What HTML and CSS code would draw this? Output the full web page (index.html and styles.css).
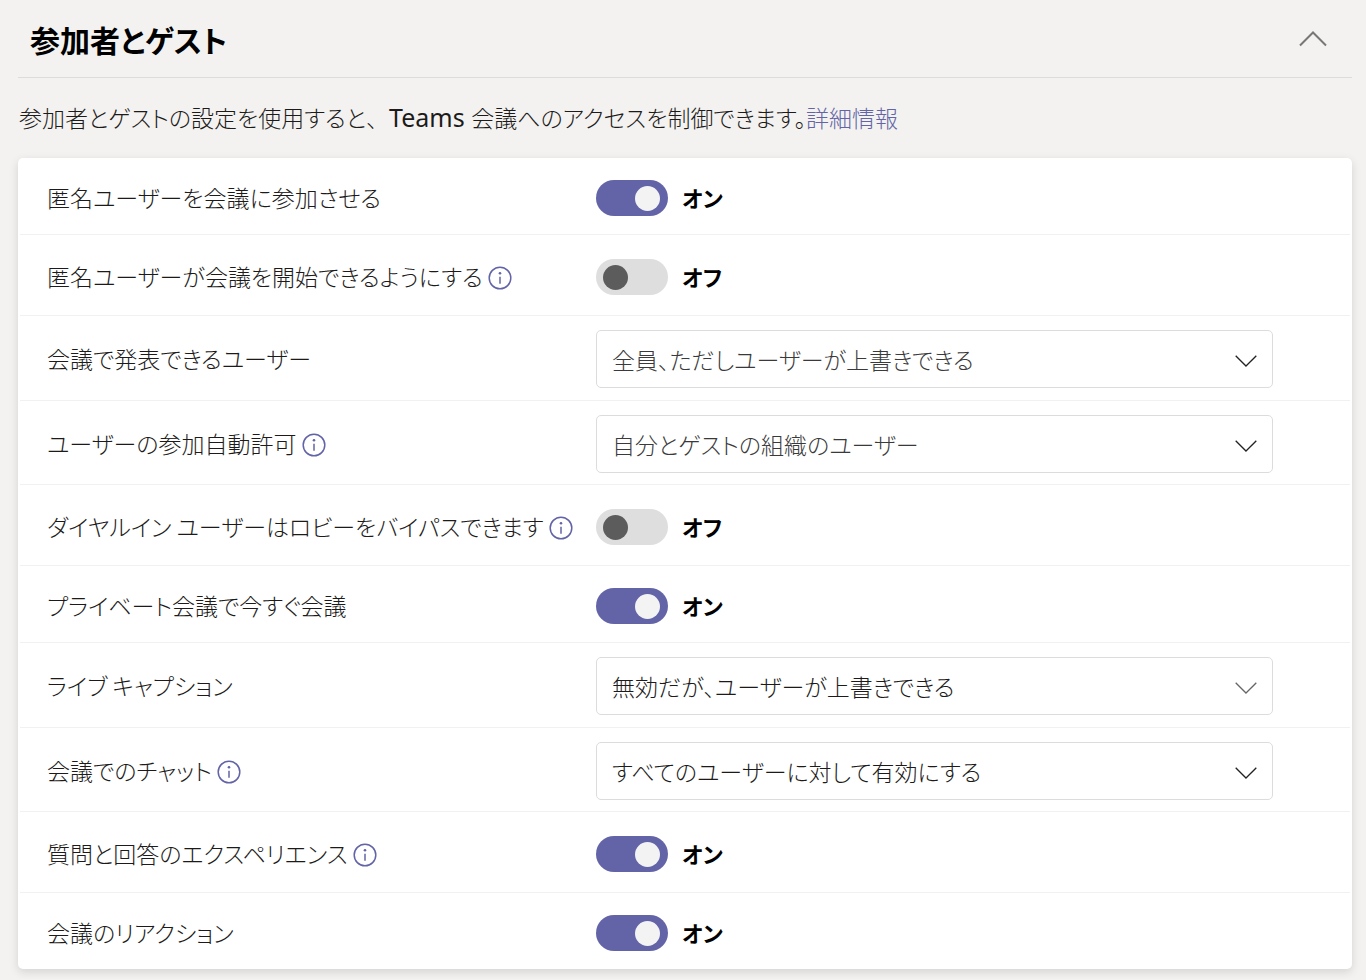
FILE: index.html
```html
<!DOCTYPE html>
<html lang="ja">
<head>
<meta charset="utf-8">
<meta name="viewport" content="width=device-width, initial-scale=1">
<title>参加者とゲスト</title>
<link rel="stylesheet" href="styles.css">
</head>
<body>
<svg class="sprite" aria-hidden="true">
  <symbol id="info" viewBox="0 0 24 24"><circle cx="12" cy="12" r="10.8" fill="none" stroke="currentColor" stroke-width="1.5"/><circle cx="12" cy="7.2" r="1.3" fill="currentColor"/><path d="M12 10.8v7" fill="none" stroke="currentColor" stroke-width="1.5"/></symbol>
  <symbol id="down" viewBox="0 0 22 12"><path d="M.7.7 11 11 21.3.7" fill="none" stroke="currentColor" stroke-width="1.3"/></symbol>
</svg>
<main class="section">
  <header class="section-head">
    <h1 class="title">参加者とゲスト</h1>
    <button class="collapse" type="button" aria-label="折りたたむ" aria-expanded="true">
      <svg width="28" height="16" viewBox="0 0 28 16"><path d="M1 14.5 14 1.5 27 14.5" fill="none" stroke="#777" stroke-width="2"/></svg>
    </button>
  </header>
  <p class="intro">参加者とゲストの設定を使用すると<span class="full">、</span><span class="latin">Teams </span>会議へのアクセスを制御できます。<a class="link" href="#">詳細情報</a></p>
  <div class="card">
    <div class="row">
      <div class="name"><label for="s1">匿名ユーザーを会議に参加させる</label></div>
      <div class="control"><input class="switch" type="checkbox" role="switch" id="s1" checked><span class="state">オン</span></div>
    </div>
    <div class="row tall">
      <div class="name"><label for="s2">匿名ユーザーが会議を開始できるようにする</label><button class="info" type="button" aria-label="情報"><svg><use href="#info"/></svg></button></div>
      <div class="control"><input class="switch" type="checkbox" role="switch" id="s2"><span class="state">オフ</span></div>
    </div>
    <div class="row choice">
      <div class="name"><label for="s3">会議で発表できるユーザー</label></div>
      <div class="picker"><select class="select muted" id="s3"><option>全員、ただしユーザーが上書きできる</option></select><svg class="arrow"><use href="#down"/></svg></div>
    </div>
    <div class="row choice noted">
      <div class="name"><label for="s4">ユーザーの参加自動許可</label><button class="info" type="button" aria-label="情報"><svg><use href="#info"/></svg></button></div>
      <div class="picker"><select class="select muted" id="s4"><option>自分とゲストの組織のユーザー</option></select><svg class="arrow"><use href="#down"/></svg></div>
    </div>
    <div class="row tall">
      <div class="name"><label for="s5">ダイヤルイン ユーザーはロビーをバイパスできます</label><button class="info" type="button" aria-label="情報"><svg><use href="#info"/></svg></button></div>
      <div class="control"><input class="switch" type="checkbox" role="switch" id="s5"><span class="state">オフ</span></div>
    </div>
    <div class="row">
      <div class="name"><label for="s6">プライベート会議で今すぐ会議</label></div>
      <div class="control"><input class="switch" type="checkbox" role="switch" id="s6" checked><span class="state">オン</span></div>
    </div>
    <div class="row choice">
      <div class="name"><label for="s7">ライブ キャプション</label></div>
      <div class="picker"><select class="select" id="s7"><option>無効だが、ユーザーが上書きできる</option></select><svg class="arrow soft"><use href="#down"/></svg></div>
    </div>
    <div class="row choice noted">
      <div class="name"><label for="s8">会議でのチャット</label><button class="info" type="button" aria-label="情報"><svg><use href="#info"/></svg></button></div>
      <div class="picker"><select class="select" id="s8"><option>すべてのユーザーに対して有効にする</option></select><svg class="arrow"><use href="#down"/></svg></div>
    </div>
    <div class="row tall">
      <div class="name"><label for="s9">質問と回答のエクスペリエンス</label><button class="info" type="button" aria-label="情報"><svg><use href="#info"/></svg></button></div>
      <div class="control"><input class="switch" type="checkbox" role="switch" id="s9" checked><span class="state">オン</span></div>
    </div>
    <div class="row">
      <div class="name"><label for="s10">会議のリアクション</label></div>
      <div class="control"><input class="switch" type="checkbox" role="switch" id="s10" checked><span class="state">オン</span></div>
    </div>
  </div>
</main>
</body>
</html>
```
FILE: styles.css
```css
* { box-sizing: border-box; }

body {
  margin: 0;
  background: #f3f2f0;
  color: #1c1b1a;
  font-family: "Noto Sans CJK JP", sans-serif;
  font-size: 23px;
  font-weight: 300;
  line-height: 36px;
  font-feature-settings: "palt";
}

.sprite { position: absolute; width: 0; height: 0; }

.section { padding: 0 14px 10px 18px; }

.section-head {
  display: flex;
  align-items: center;
  justify-content: space-between;
  height: 78px;
  padding: 1px 25px 0 12px;
  border-bottom: 1px solid #dddcdb;
}

.title { margin: 0; color: #000; font-size: 30px; font-weight: 700; line-height: 40px; }

.collapse { display: flex; padding: 0; border: 0; background: none; }

.intro { margin: 21px 0 23px; padding-left: 1px; }
.full { font-feature-settings: normal; }
.latin { font-family: "Noto Sans", sans-serif; font-size: 25px; font-weight: 400; line-height: 1; }
.link { color: #6264a7; text-decoration: none; }

.card {
  padding: 0 2px;
  border-radius: 5px;
  background: #fff;
  box-shadow: 0 3px 10px rgba(0, 0, 0, 0.13);
}

.row {
  display: grid;
  grid-template-columns: 549fr 677fr;
  align-items: center;
  padding: 22px 77px 18px 27px;
  border-bottom: 1px solid #f1f1f1;
}
.row:last-child { border-bottom: 0; }
.tall { padding-top: 24px; padding-bottom: 20px; }
.choice { padding-top: 14px; padding-bottom: 12px; }
.noted { padding-bottom: 11px; }

.name { display: flex; align-items: center; gap: 5px; padding-bottom: 2px; line-height: 30px; white-space: nowrap; }

.info { display: flex; padding: 4px 0 0; border: 0; background: none; color: #6264a7; }
.info svg { width: 24px; height: 24px; }

.control { display: flex; align-items: center; gap: 14px; }

.switch {
  appearance: none;
  display: flex;
  align-items: center;
  width: 72px;
  height: 36px;
  margin: 0;
  padding: 0 8px 0 7px;
  border-radius: 18px;
  background: #dedede;
}
.switch::before { content: ""; width: 25px; height: 25px; border-radius: 50%; background: #5c5c5c; }
.switch:checked { justify-content: flex-end; background: #6264a7; }
.switch:checked::before { background: #f3f3f3; }

.state { padding-bottom: 2px; color: #000; font-weight: 700; font-size: 22px; line-height: 30px; }

.picker { position: relative; }

.select {
  appearance: none;
  display: block;
  width: 100%;
  height: 58px;
  padding: 0 50px 0 15px;
  border: 1px solid #dcdcdc;
  border-radius: 5px;
  background: #fff;
  color: #1c1b1a;
  font: inherit;
  font-feature-settings: inherit;
}
.muted { color: #3a3a3a; }

.arrow { position: absolute; top: 25px; right: 16px; width: 22px; height: 12px; color: #222; pointer-events: none; }
.soft { color: #666; }
```
